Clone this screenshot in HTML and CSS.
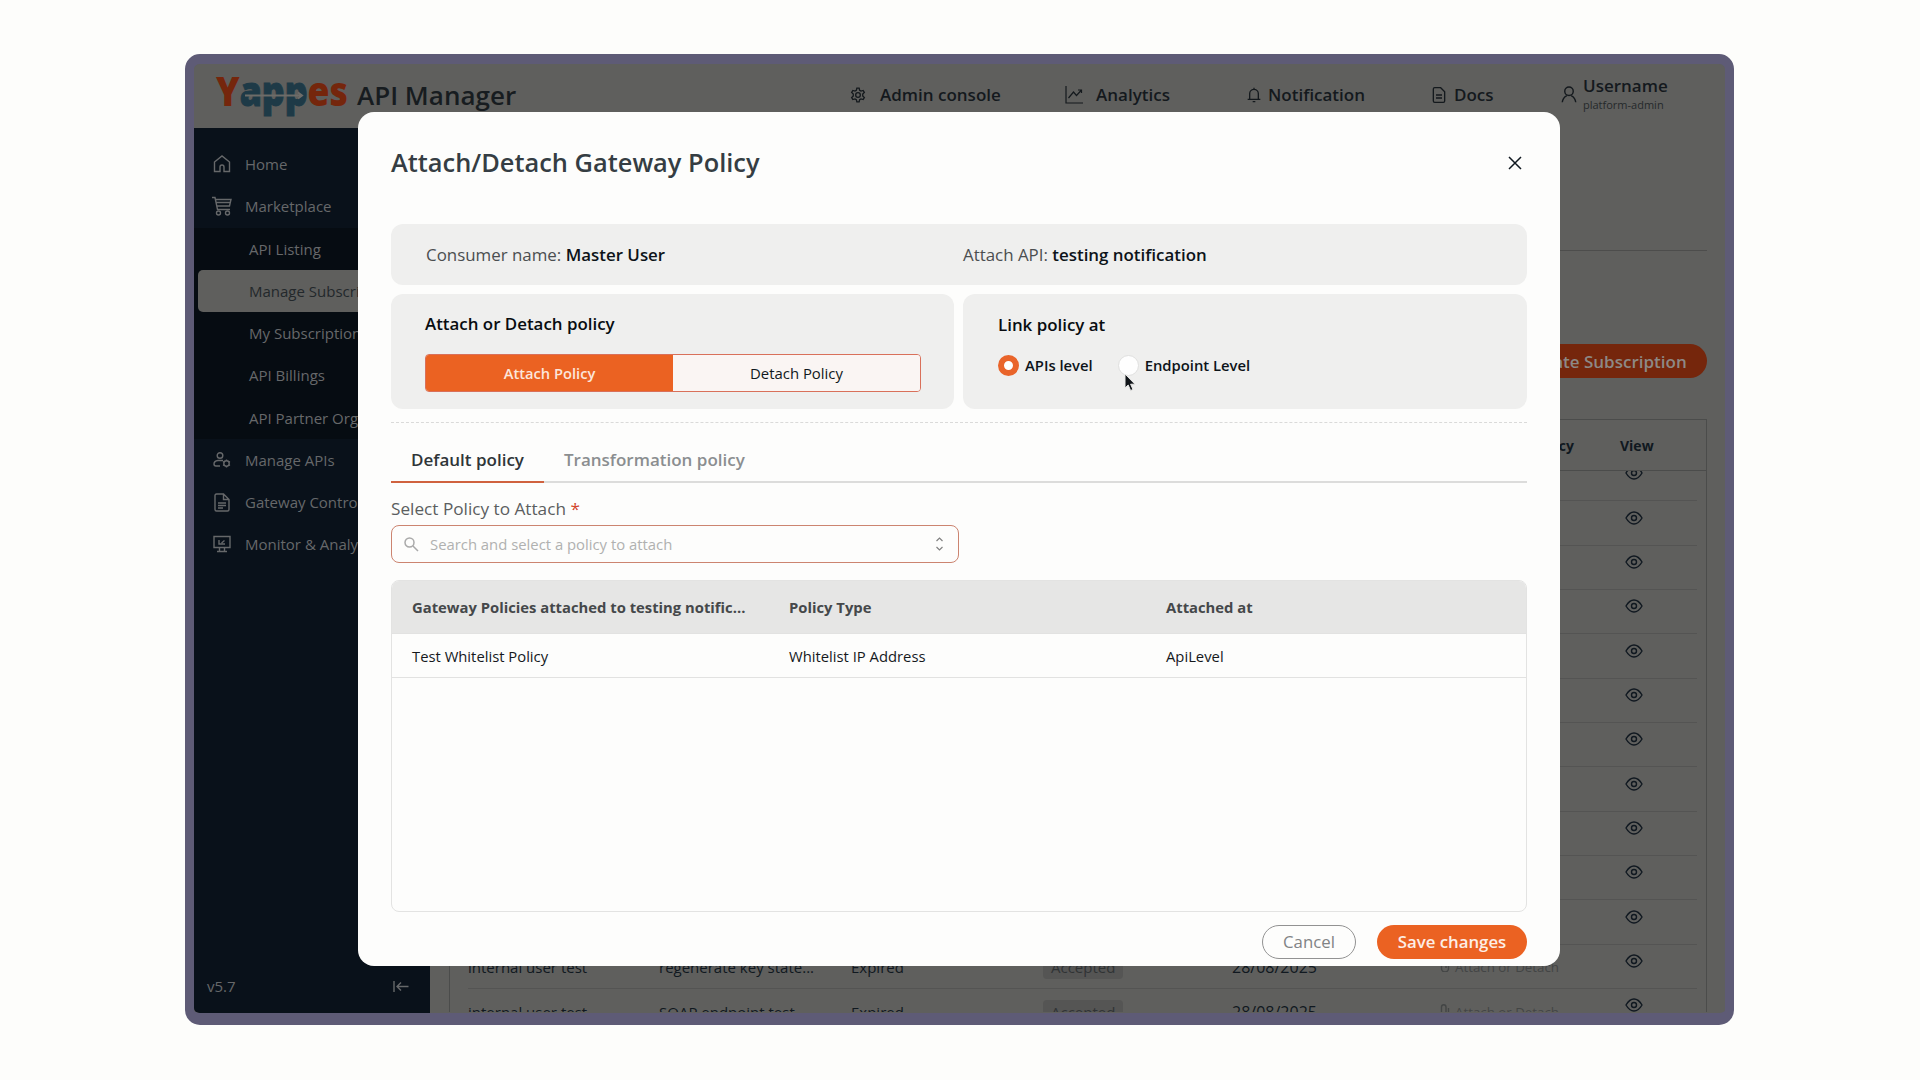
FILE: index.html
```
<!DOCTYPE html>
<html lang="en">
<head>
    <meta charset="UTF-8">
    <meta name="viewport" content="width=device-width, initial-scale=1.0">
    <title>Yappes API Manager - Manage Subscriptions</title>
    <link rel="stylesheet" href="styles.css">
</head>
<body>
    <div class="window">
        <header class="topbar">
            <svg class="logo" width="134" height="44" viewBox="0 0 134 44">
                <text x="1" y="33" textLength="132" lengthAdjust="spacingAndGlyphs"><tspan class="logo-warm">Y</tspan><tspan class="logo-cool">app</tspan><tspan class="logo-warm">es</tspan></text>
                <path class="logo-link" d="M30 22.500H86M83 19.500l4 3-4 3"/>
            </svg>
            <h1>API Manager</h1>
            <nav class="topnav">
                <a class="nav-admin">
                    <svg class="icon" width="16" height="16" viewBox="0 0 24 24"><path d="M9.500 5 10.300 1.800h3.400L14.500 5l2 1.200 3.200-1 1.800 3-2.400 2.300v3l2.400 2.300-1.800 3-3.200-1-2 1.200-.8 3.200h-3.400L9.500 19l-2-1.200-3.200 1-1.800-3 2.400-2.300v-3L2.500 8.200l1.800-3 3.200 1z"/><circle cx="12" cy="12" r="3.500"/></svg>
                    Admin console
                </a>
                <a class="nav-analytics">
                    <svg class="icon thin" width="18" height="18" viewBox="0 0 18 18"><path d="M1 0v17h17M3.500 12l5-6 3 3.500L16.500 4M13 4h3.500v3"/></svg>
                    Analytics
                </a>
                <a class="nav-bell">
                    <svg class="icon" width="14" height="16" viewBox="0 0 21 24"><path d="M10.500 1v3M4 18V10a6.500 6.500 0 0 1 13 0v8M1 18.500h19M8.500 22h4"/></svg>
                    Notification
                </a>
                <a class="nav-docs">
                    <svg class="icon" width="14" height="16" viewBox="0 0 21 24"><path d="M2 3q0-2 2-2h9l6 6v14q0 2-2 2H4q-2 0-2-2zM6 12h9M6 16.500h9"/></svg>
                    Docs
                </a>
                <a class="nav-user">
                    <svg class="icon" width="16" height="17" viewBox="0 0 22 24"><circle cx="11" cy="7.500" r="6"/><path d="M1.500 23c.5-5 3.500-8 6.500-9.500M20.500 23c-.5-5-3.500-8-6.500-9.500"/></svg>
                    <span class="user"><b>Username</b><small>platform-admin</small></span>
                </a>
            </nav>
        </header>

        <div class="layout">
            <aside class="sidebar">
                <a class="item"><svg class="icon" width="18" height="18" viewBox="0 0 18 18"><path d="M1.500 7 9 1l7.500 6v9.500H11V12a2 2 0 0 0-4 0v4.500H1.500z"/></svg>Home</a>
                <a class="item"><svg class="icon" width="20" height="20" viewBox="0 0 20 20"><path d="M0 1.500h3l2.500 12H18M3.500 3.500H19l-1.500 6.500H5M4.500 6.500h13.500"/><circle cx="6.500" cy="17" r="2"/><circle cx="15.500" cy="17" r="2"/></svg>Marketplace</a>
                <div class="submenu">
                    <a class="item">API Listing</a>
                    <a class="item active">Manage Subscriptions</a>
                    <a class="item">My Subscriptions</a>
                    <a class="item">API Billings</a>
                    <a class="item">API Partner Organization</a>
                </div>
                <a class="item"><svg class="icon" width="18" height="18" viewBox="0 0 18 18"><circle cx="7" cy="4.500" r="2.800"/><path d="M10 9.500H5q-4 .5-4 3.500c0 1.500 1 2 2 2h4"/><circle cx="13.500" cy="12.500" r="2.700"/><path d="M13.500 8.500v1M13.500 15.500v1M10 10.500l1 .6M16 13.900l1 .6M17 10.500l-1 .6M11 13.900l-1 .6"/></svg>Manage APIs</a>
                <a class="item"><svg class="icon" width="18" height="19" viewBox="0 0 18 19"><path d="M2 2.500Q2 1 3.500 1h7L16 6.500v10q0 1.500-1.500 1.500h-11Q2 18 2 16.500zM10.500 1v5.500H16M5 10h8M5 12.500h8M5 15h5"/></svg>Gateway Controls</a>
                <a class="item"><svg class="icon" width="18" height="18" viewBox="0 0 18 18"><path d="M1 1.500h16v11H1zM6.500 12.500v4M11.500 12.500v4M4 16.500h10M6 5v4h6M8.500 8l3-2.500"/></svg>Monitor &amp; Analytics</a>
                <div class="sidebar-foot">
                    <span>v5.7</span>
                    <svg class="icon" width="16" height="11" viewBox="0 0 16 11"><path d="M1 0v11M15.500 5.500H4M8 1.500l-4 4 4 4"/></svg>
                </div>
            </aside>

            <main class="content">
                <div class="page-head"></div>
                <div class="toolbar"><button class="create-btn">Create Subscription</button></div>
                <section class="subs">
                    <div class="subs-row subs-head">
                        <span></span><span></span><span></span><span></span><span></span>
                        <span>Attach Policy</span>
                        <span>View</span>
                    </div>
                    <div class="subs-body" id="subsBody"></div>
                </section>
            </main>
        </div>
    </div>

    <div class="modal">
        <div class="modal-head">
            <h2>Attach/Detach Gateway Policy</h2>
            <svg class="close" width="14" height="14" viewBox="0 0 14 14"><path d="M1 1l12 12M13 1 1 13"/></svg>
        </div>

        <div class="card info">
            <span>Consumer name: <b>Master User</b></span>
            <span>Attach API: <b>testing notification</b></span>
        </div>

        <div class="cards">
            <div class="card">
                <h3>Attach or Detach policy</h3>
                <div class="toggle">
                    <button class="on">Attach Policy</button>
                    <button>Detach Policy</button>
                </div>
            </div>
            <div class="card link-card">
                <h3>Link policy at</h3>
                <div class="radios">
                    <label><i class="radio checked"></i>APIs level</label>
                    <label><i class="radio"></i>Endpoint Level</label>
                </div>
            </div>
        </div>

        <div class="tabs">
            <a class="tab current">Default policy</a>
            <a class="tab">Transformation policy</a>
        </div>

        <label class="field-label">Select Policy to Attach <em>*</em></label>
        <div class="search">
            <svg width="15" height="15" viewBox="0 0 15 15"><circle cx="5.500" cy="5.500" r="4.500"/><path d="M9 9l5 5"/></svg>
            <span>Search and select a policy to attach</span>
            <svg class="sort" width="9" height="14" viewBox="0 0 9 14"><path d="M1.500 4 4.500 1l3 3M1.500 10l3 3 3-3"/></svg>
        </div>

        <div class="policies">
            <div class="policy-row policy-head">
                <span>Gateway Policies attached to testing notific...</span>
                <span>Policy Type</span>
                <span>Attached at</span>
            </div>
            <div class="policy-row">
                <span>Test Whitelist Policy</span>
                <span>Whitelist IP Address</span>
                <span>ApiLevel</span>
            </div>
        </div>

        <div class="actions">
            <button class="cancel">Cancel</button>
            <button class="save">Save changes</button>
        </div>
    </div>

    <svg class="cursor" width="14" height="20" viewBox="0 0 14 20"><path d="M2 1v14l3.200-3 2.400 5.500 2.400-1-2.400-5.300H12z"/></svg>

    <script>
        // only the last rows are visible under the dialog
        const rows = Array(11).fill(null).concat([
            ['internal user test', 'regenerate key state...', 'Expired', 'Accepted', '28/08/2025', 'Attach or Detach'],
            ['internal user test', 'SOAP endpoint test', 'Expired', 'Accepted', '28/08/2025', 'Attach or Detach']
        ]);
        const eye = '<svg class="icon" width="18" height="14" viewBox="0 0 18 14"><path d="M1 7q3.500-6 8-6t8 6q-3.500 6-8 6T1 7z"/><circle cx="9" cy="7" r="2.500"/></svg>';
        const clip = '<svg class="icon" width="10" height="13" viewBox="0 0 10 13"><path d="M8.500 4v5.500a3.500 3.500 0 0 1-7 0V3a2.200 2.200 0 0 1 4.500 0v6"/></svg>';

        document.getElementById('subsBody').innerHTML = rows.map(row => {
            const r = row || ['', '', '', '', '', ''];
            return '<div class="subs-row">' +
                '<span>' + r[0] + '</span><span>' + r[1] + '</span><span>' + r[2] + '</span>' +
                '<span>' + (r[3] ? '<i class="badge">' + r[3] + '</i>' : '') + '</span>' +
                '<span class="date">' + r[4] + '</span>' +
                '<span class="attach">' + (r[5] ? clip + r[5] : '') + '</span>' +
                '<span class="view">' + eye + '</span></div>';
        }).join('');
    </script>
</body>
</html>
```

FILE: styles.css
```
* {
    box-sizing: border-box;
}

body {
    margin: 0;
    height: 1080px;
    overflow: hidden;
    position: relative;
    background: #fdfdfb;
    font-family: 'Open Sans', 'Noto Sans', sans-serif;
    font-size: 15px;
    color: #101820;
    padding: 54px 186px 0 185px;
}

h1, h2, h3 {
    margin: 0;
    font-weight: 600;
}

button {
    font-family: inherit;
    padding: 0;
    border: none;
}

.icon {
    fill: none;
    stroke: currentColor;
    stroke-width: 1.4;
    flex: none;
}

.topnav .icon {
    stroke-width: 2;
}

.topnav .icon.thin {
    stroke-width: 1.2;
}

/* app window */
.window {
    height: 971px;
    border: 9px solid #5e5b76;
    border-top-width: 10px;
    border-bottom-width: 12px;
    border-radius: 15px;
    background: #5f5f5d;
    overflow: hidden;
}

.topbar {
    height: 64px;
    display: flex;
    align-items: center;
    padding: 0 0 3px 21px;
}

.logo {
    font-family: 'Open Sans', sans-serif;
    font-size: 41px;
    font-weight: 800;
    overflow: visible;
}

.logo-warm {
    fill: #75260c;
}

.logo-cool {
    fill: #1e3a47;
    stroke: #1e3a47;
}

.logo-link {
    fill: none;
    stroke: #6d6c69;
    stroke-width: 2;
}

.topbar h1 {
    font-size: 26px;
    margin-left: 8px;
    width: 160px;
    white-space: nowrap;
    color: #171c20;
}

.topnav {
    flex: 1;
    display: flex;
    align-items: center;
    font-size: 17px;
    font-weight: 600;
    padding-left: 333px;
    white-space: nowrap;
    color: #14191d;
}

.topnav a {
    display: flex;
    align-items: center;
}

.nav-admin {
    width: 215px;
    gap: 14px;
}

.nav-analytics {
    width: 182px;
    gap: 13px;
}

.nav-bell {
    width: 185px;
    gap: 7px;
}

.nav-docs {
    width: 129px;
    gap: 8px;
}

.nav-user {
    gap: 6px;
}

.user b, .user small {
    display: block;
}

.user b {
    font-weight: 600;
    line-height: 20px;
}

.user small {
    font-size: 11px;
    font-weight: 400;
    line-height: 17px;
    color: #25292b;
}

.layout {
    display: flex;
    height: 885px;
}

.sidebar {
    width: 236px;
    background: #09111a;
    color: #66686a;
    padding-top: 15px;
    display: flex;
    flex-direction: column;
    border-bottom-left-radius: 5px;
}

.item {
    height: 42.250px;
    display: flex;
    align-items: center;
    padding-left: 18px;
    white-space: nowrap;
}

.item .icon {
    width: 20px;
    margin-right: 13px;
}

.submenu {
    background: #060c12;
}

.submenu .item {
    padding-left: 55px;
}

.submenu .item.active {
    margin-left: 4px;
    padding-left: 51px;
    background: #5f5f5d;
    color: #23282b;
    border-radius: 5px;
}

.sidebar-foot {
    margin-top: auto;
    display: flex;
    justify-content: space-between;
    align-items: center;
    padding: 0 21px 17px 13px;
}

/* subscriptions page */
.content {
    flex: 1;
    padding: 0 18px 0 19px;
}

.page-head {
    height: 123px;
    border-bottom: 1px solid #4d4d4c;
}

.toolbar {
    display: flex;
    justify-content: flex-end;
    margin-top: 93px;
}

.create-btn {
    width: 202px;
    height: 34px;
    border-radius: 17px;
    background: #75260c;
    color: #8d8986;
    font-size: 17px;
    font-weight: 600;
}

.subs {
    margin-top: 41px;
    height: 593px;
    border: 1px solid #4b4c4b;
    border-bottom: none;
    overflow: hidden;
    display: flex;
    flex-direction: column;
}

.subs-row {
    height: 44.350px;
    flex: none;
    display: grid;
    grid-template-columns: 191px 192px 192px 189px 208px 180px 1fr;
    align-items: center;
    border-bottom: 1px solid #545453;
    margin: 0 9px 0 18px;
}

.subs-head {
    height: 51px;
    font-size: 14px;
    font-weight: 700;
    border-bottom-color: #4b4c4b;
    margin: 0;
    padding-left: 18px;
}

.subs-head span:nth-child(6) {
    text-align: right;
    padding-right: 46px;
}

.subs-body {
    flex: 1;
    min-height: 0;
    overflow: hidden;
}

.subs-body span {
    padding-top: 2px;
}

/* body is scrolled a little under the header */
.subs-body .subs-row:first-child {
    margin-top: -14px;
}

.badge {
    font-style: normal;
    background: #555554;
    border-radius: 4px;
    padding: 2px 8px;
    color: #303334;
}

.date {
    font-size: 16px;
}

.attach {
    font-size: 13.300px;
    color: #434545;
}

.attach .icon {
    margin-right: 5px;
}

.view .icon {
    display: block;
    margin: 0 0 13px 5px;
}

/* dialog */
.modal {
    position: absolute;
    left: 358px;
    top: 112px;
    width: 1202px;
    height: 854px;
    padding: 0 33px 7px 33px;
    background: #fdfdfc;
    border-radius: 16px;
    display: flex;
    flex-direction: column;
}

.modal-head {
    height: 112px;
    display: flex;
    justify-content: space-between;
    padding: 32px 5px 0 0;
}

.modal-head h2 {
    font-size: 25.400px;
    line-height: 36px;
    color: #353d43;
}

.close {
    margin-top: 12px;
    fill: none;
    stroke: #101820;
    stroke-width: 1.5;
}

.card {
    background: #efefee;
    border-radius: 12px;
}

.info {
    height: 61px;
    display: grid;
    grid-template-columns: 537px 1fr;
    align-items: center;
    padding-left: 35px;
    font-size: 16.900px;
    color: #4b4e50;
}

.info b {
    font-weight: 600;
    color: #0d1319;
}

.cards {
    display: grid;
    grid-template-columns: 563px 564px;
    justify-content: space-between;
    height: 138px;
    padding: 9px 0 13px;
    border-bottom: 1px dashed #dadad9;
}

.cards .card {
    padding: 18px 34px 0;
}

.cards .link-card {
    padding: 19px 35px 0;
}

.cards h3 {
    font-size: 16.900px;
    line-height: 24px;
    color: #080c10;
}

.toggle {
    display: grid;
    grid-template-columns: 1fr 1fr;
    height: 38px;
    width: 496px;
    margin-top: 18px;
    border: 1px solid #d9705a;
    border-radius: 4px;
    overflow: hidden;
}

.toggle button {
    background: #faf5f3;
    font-size: 14.900px;
    font-weight: 500;
    color: #101820;
}

.toggle .on {
    background: #eb6222;
    color: #fce6db;
    font-size: 14.700px;
    font-weight: 600;
}

.radios {
    display: flex;
    gap: 25px;
    margin-top: 17px;
    font-size: 14.800px;
    font-weight: 600;
    color: #0d1319;
}

.radios label {
    display: flex;
    align-items: center;
    gap: 6px;
    line-height: 22px;
}

.radio {
    width: 21px;
    height: 21px;
    border-radius: 50%;
    background: #fefefe;
    border: 1px solid #e0e0df;
}

.radio.checked {
    border: 6px solid #e9642a;
}

.tabs {
    height: 60px;
    display: flex;
    border-bottom: 2px solid #dcdcdb;
    font-size: 17px;
    font-weight: 600;
}

.tab {
    padding: 24px 20px 0;
    height: 60px;
    line-height: 26px;
    color: #8b8e90;
}

.tab.current {
    color: #2f3538;
    border-bottom: 2px solid #d0623f;
}

.field-label {
    margin-top: 14px;
    line-height: 24px;
    font-size: 17.200px;
    color: #5b5e60;
}

.field-label em {
    font-style: normal;
    color: #d2452c;
}

.search {
    margin-top: 4px;
    width: 568px;
    height: 38px;
    border: 1px solid #cc8470;
    border-radius: 8px;
    display: flex;
    align-items: center;
    padding: 0 14px 0 12px;
    font-size: 14.850px;
    color: #b0b1b0;
}

.search span {
    flex: 1;
    padding-left: 11px;
}

.search svg {
    fill: none;
    stroke: #a9a9a9;
    stroke-width: 1.5;
}

.search .sort {
    stroke: #808080;
    stroke-width: 1.2;
}

.policies {
    margin-top: 17px;
    height: 332px;
    border: 1px solid #e3e3e2;
    border-radius: 8px;
    overflow: hidden;
}

.policy-row {
    height: 44px;
    display: grid;
    grid-template-columns: 377px 377px 1fr;
    align-items: center;
    padding-left: 20px;
    font-size: 14.800px;
    color: #15191c;
    border-bottom: 1px solid #e2e2e1;
}

.policy-head {
    height: 53px;
    background: #e6e6e5;
    font-weight: 700;
    color: #45484a;
}

.actions {
    display: flex;
    justify-content: flex-end;
    gap: 21px;
    margin-top: auto;
}

.actions button {
    height: 34px;
    border-radius: 17px;
    font-size: 16.800px;
    padding-bottom: 2px;
}

.cancel {
    width: 94px;
    border: 1px solid #929292;
    background: #fdfdfc;
    color: #818385;
}

.actions .save {
    width: 150px;
    background: #eb6222;
    color: #fdeee6;
    font-weight: 600;
}

.cursor {
    position: absolute;
    left: 1123px;
    top: 373px;
    fill: #101418;
    stroke: #e9e9e8;
    stroke-width: 1;
}
```
